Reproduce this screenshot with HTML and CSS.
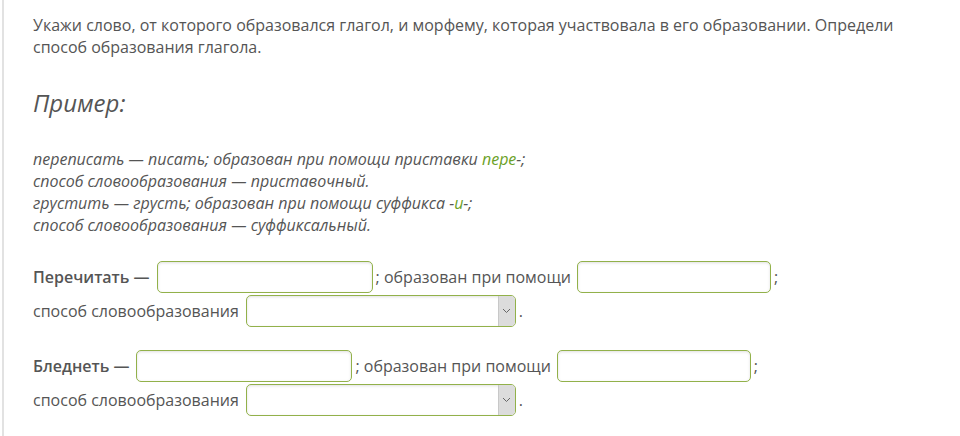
FILE: index.html
```html
<!DOCTYPE html>
<html lang="ru">
<head>
    <meta charset="UTF-8">
    <meta name="viewport" content="width=device-width, initial-scale=1.0">
    <title>Способ образования глагола</title>
    <link rel="stylesheet" href="styles.css">
</head>
<body>
    <div class="task">
        <p class="intro">Укажи слово, от которого образовался глагол, и морфему, которая участвовала в его образовании. Определи способ образования глагола.</p>

        <h2 class="example-title">Пример:</h2>

        <div class="example">
            переписать — писать; образован при помощи приставки <span class="morph">пере</span>-;<br>
            способ словообразования — приставочный.<br>
            грустить — грусть; образован при помощи суффикса -<span class="morph">и</span>-;<br>
            способ словообразования — суффиксальный.
        </div>

        <div class="answer">
            <div class="line">
                <b>Перечитать —</b>
                <input type="text" class="field field-word">
                <span>; образован при помощи</span>
                <input type="text" class="field field-morph">
                <span>;</span>
            </div>
            <div class="line">
                <span>способ словообразования</span>
                <div class="select-box">
                    <select class="select">
                        <option></option>
                        <option>приставочный</option>
                        <option>суффиксальный</option>
                    </select>
                    <span class="select-arrow">
                        <svg width="9" height="6" viewBox="0 0 9 6"><path d="M1 1 L4.5 4.5 L8 1" fill="none" stroke="#666" stroke-width="1"/></svg>
                    </span>
                </div>
                <span>.</span>
            </div>
        </div>

        <div class="answer">
            <div class="line">
                <b>Бледнеть —</b>
                <input type="text" class="field field-word">
                <span>; образован при помощи</span>
                <input type="text" class="field field-morph">
                <span>;</span>
            </div>
            <div class="line">
                <span>способ словообразования</span>
                <div class="select-box">
                    <select class="select">
                        <option></option>
                        <option>приставочный</option>
                        <option>суффиксальный</option>
                    </select>
                    <span class="select-arrow">
                        <svg width="9" height="6" viewBox="0 0 9 6"><path d="M1 1 L4.5 4.5 L8 1" fill="none" stroke="#666" stroke-width="1"/></svg>
                    </span>
                </div>
                <span>.</span>
            </div>
        </div>
    </div>
</body>
</html>
```

FILE: styles.css
```css
body {
    margin: 0;
    padding: 0;
    background: #fff;
    font-family: 'Open Sans', sans-serif;
    color: #555;
    font-size: 16px;
}

.task {
    margin-left: 2px;
    border-left: 2px solid #e2e2e2;
    padding: 14px 20px 20px 29px;
    min-height: 436px;
    box-sizing: border-box;
}

.intro {
    margin: 0;
    line-height: 22px;
}

.example-title {
    margin: 29px 0 0;
    font-size: 24px;
    font-style: italic;
    font-weight: normal;
    line-height: 32px;
}

.example {
    margin-top: 29px;
    font-style: italic;
    font-size: 16px;
    line-height: 22px;
}

.morph {
    color: #6ba127;
}

.answer {
    margin-top: 24px;
}

.answer + .answer {
    margin-top: 21px;
}

.line {
    display: flex;
    align-items: center;
    gap: 3px;
    height: 34px;
}

.line b {
    font-weight: 600;
    margin-right: 4px;
}

.field {
    height: 32px;
    box-sizing: border-box;
    border: 1px solid #92b14a;
    border-radius: 5px;
    box-shadow: inset 0 1px 3px rgba(0, 0, 0, 0.12);
    font-family: inherit;
    font-size: 15px;
    padding: 0 8px;
    outline: none;
}

.field-word {
    width: 216px;
}

.field-morph {
    width: 194px;
    margin-left: 3px;
}

.select-box {
    position: relative;
    width: 270px;
    height: 32px;
    margin-left: 4px;
}

.select {
    appearance: none;
    width: 100%;
    height: 100%;
    box-sizing: border-box;
    border: 1px solid #92b14a;
    border-radius: 5px;
    background: #fff;
    box-shadow: inset 0 1px 3px rgba(0, 0, 0, 0.12);
    font-family: inherit;
    font-size: 15px;
    outline: none;
}

.select-arrow {
    position: absolute;
    top: 1px;
    right: 1px;
    bottom: 1px;
    width: 16px;
    background: #dcdcdc;
    border-left: 1px solid #c8c8c8;
    border-radius: 0 4px 4px 0;
    display: flex;
    align-items: center;
    justify-content: center;
    pointer-events: none;
}
```
